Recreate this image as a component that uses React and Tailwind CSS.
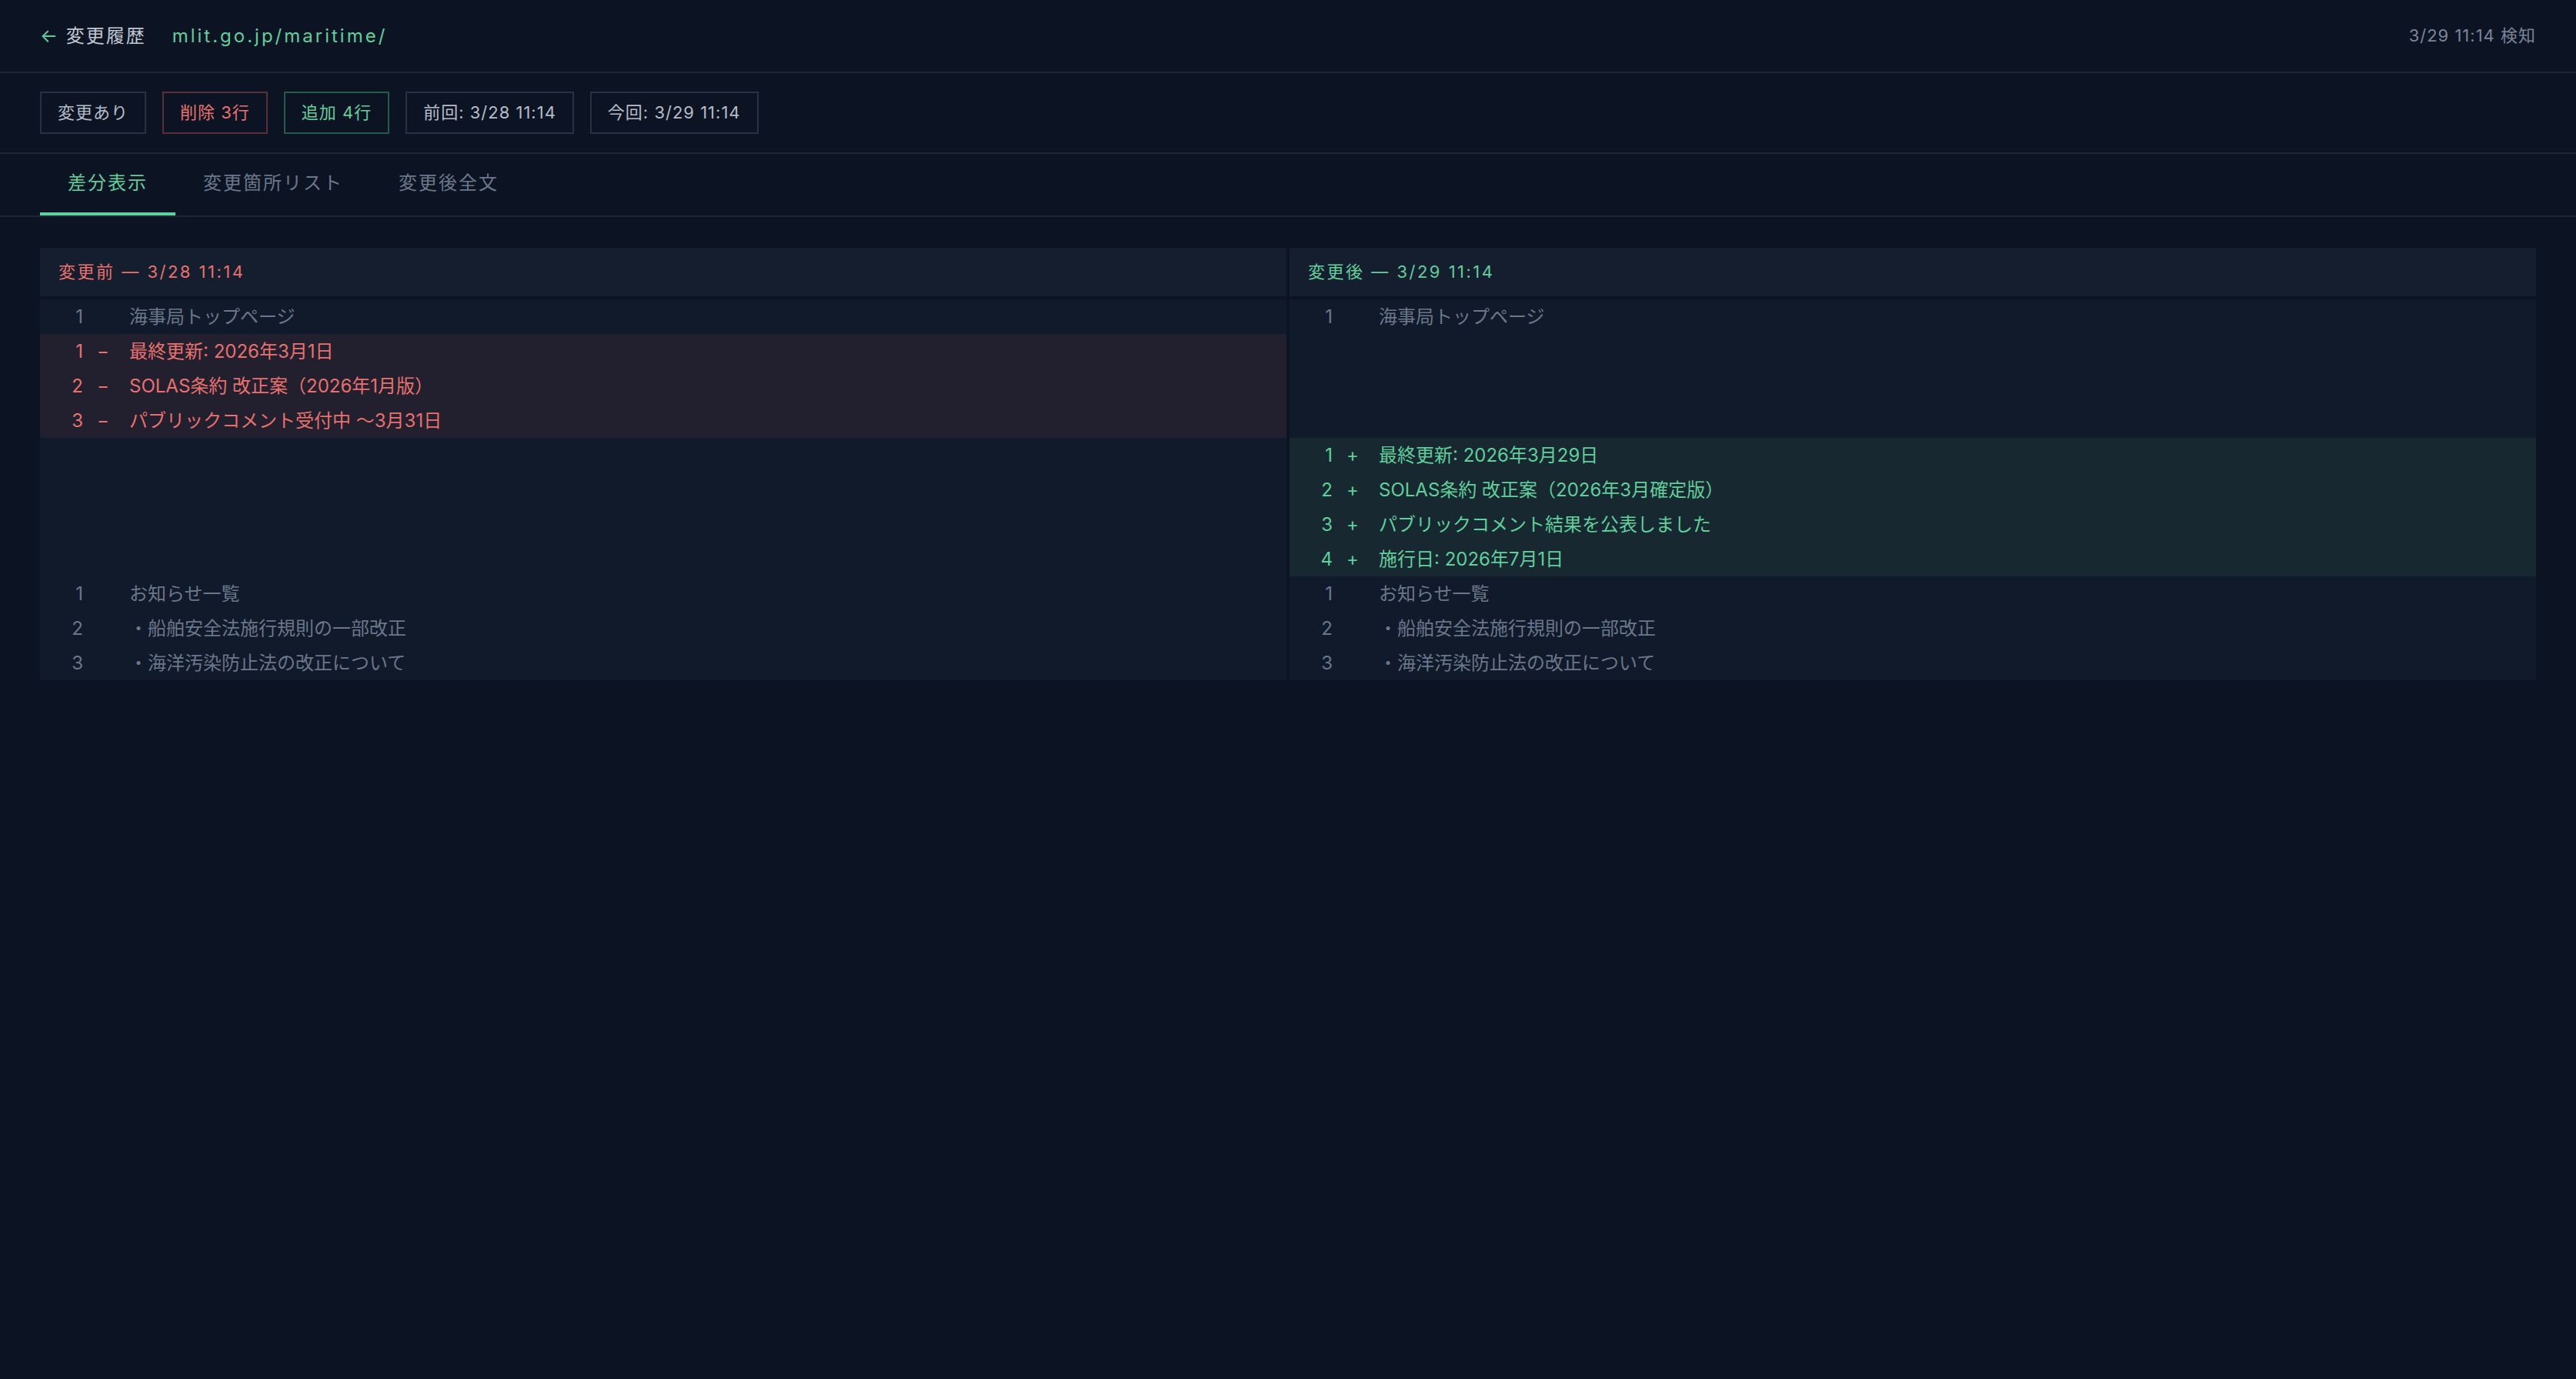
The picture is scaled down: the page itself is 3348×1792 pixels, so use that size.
import React from "react";

const left = [
  { type: "ctx", n: "1", text: "海事局トップページ" },
  { type: "del", n: "1", text: "最終更新: 2026年3月1日" },
  { type: "del", n: "2", text: "SOLAS条約 改正案（2026年1月版）" },
  { type: "del", n: "3", text: "パブリックコメント受付中 〜3月31日" },
  { type: "empty" },
  { type: "empty" },
  { type: "empty" },
  { type: "empty" },
  { type: "ctx", n: "1", text: "お知らせ一覧" },
  { type: "ctx", n: "2", text: "・船舶安全法施行規則の一部改正" },
  { type: "ctx", n: "3", text: "・海洋汚染防止法の改正について" },
];

const right = [
  { type: "ctx", n: "1", text: "海事局トップページ" },
  { type: "empty" },
  { type: "empty" },
  { type: "empty" },
  { type: "add", n: "1", text: "最終更新: 2026年3月29日" },
  { type: "add", n: "2", text: "SOLAS条約 改正案（2026年3月確定版）" },
  { type: "add", n: "3", text: "パブリックコメント結果を公表しました" },
  { type: "add", n: "4", text: "施行日: 2026年7月1日" },
  { type: "ctx", n: "1", text: "お知らせ一覧" },
  { type: "ctx", n: "2", text: "・船舶安全法施行規則の一部改正" },
  { type: "ctx", n: "3", text: "・海洋汚染防止法の改正について" },
];

function Row({ r }) {
  if (r.type === "empty") return <div className="h-[45px]" />;
  const styles = {
    ctx: "text-[#6a778b]",
    del: "bg-[#221f2e] text-[#e8716f]",
    add: "bg-[#172830] text-[#5fcf9b]",
  };
  const marker = r.type === "del" ? "−" : r.type === "add" ? "+" : "";
  return (
    <div className={"flex h-[45px] items-center text-[24px] " + styles[r.type]}>
      <span className="w-[56px] text-right">{r.n}</span>
      <span className="w-[52px] text-center">{marker}</span>
      <span className="pl-[8px] whitespace-pre">{r.text}</span>
    </div>
  );
}

export default function App() {
  return (
    <div className="min-h-screen bg-[#0c1424] font-['Inter','Noto_Sans_CJK_JP',sans-serif]">
      <header className="flex h-[95px] items-center justify-between border-b-2 border-[#1d2636] px-[52px]">
        <div className="flex items-center gap-[34px] text-[24px]">
          <span className="tracking-[2px] text-[#c0c7d1]">
            <span className="text-[#5fcf9b]">←</span> 変更履歴
          </span>
          <span className="tracking-[3px] text-[#5fcf9b]">mlit.go.jp/maritime/</span>
        </div>
        <span className="text-[22px] tracking-[1px] text-[#7a8599]">3/29 11:14 検知</span>
      </header>

      <div className="flex gap-[21px] border-b-2 border-[#1d2636] px-[52px] py-[24px] text-[22px] tracking-[1px]">
        <span className="flex h-[55px] items-center border-2 border-[#263143] px-[21px] text-[#b4bcc8]">変更あり</span>
        <span className="flex h-[55px] items-center border-2 border-[#5b2f38] px-[21px] text-[#e8716f]">削除 3行</span>
        <span className="flex h-[55px] items-center border-2 border-[#235a4b] px-[21px] text-[#5fcf9b]">追加 4行</span>
        <span className="flex h-[55px] items-center border-2 border-[#263143] px-[21px] text-[#b4bcc8]">前回: 3/28 11:14</span>
        <span className="flex h-[55px] items-center border-2 border-[#263143] px-[21px] text-[#b4bcc8]">今回: 3/29 11:14</span>
      </div>

      <nav className="flex border-b-2 border-[#1d2636] px-[52px] text-[24px] tracking-[2px]">
        <span className="flex h-[80px] items-center border-b-4 border-[#5fcf9b] px-[36px] text-[#5fcf9b]">差分表示</span>
        <span className="flex h-[80px] items-center border-b-4 border-transparent px-[36px] text-[#6b778a]">変更箇所リスト</span>
        <span className="flex h-[80px] items-center border-b-4 border-transparent px-[36px] text-[#6b778a]">変更後全文</span>
      </nav>

      <main className="px-[52px] pt-[40px]">
        <div className="grid grid-cols-2 gap-[4px]">
          <div className="flex h-[63px] items-center bg-[#151e2e] px-[24px] text-[22px] tracking-[2.5px] text-[#e8716f]">
            変更前 — 3/28 11:14
          </div>
          <div className="flex h-[63px] items-center bg-[#151e2e] px-[24px] text-[22px] tracking-[2.5px] text-[#5fcf9b]">
            変更後 — 3/29 11:14
          </div>
          <div className="bg-[#111a2a]">
            {left.map((r, i) => (
              <Row key={i} r={r} />
            ))}
          </div>
          <div className="bg-[#111a2a]">
            {right.map((r, i) => (
              <Row key={i} r={r} />
            ))}
          </div>
        </div>
      </main>
    </div>
  );
}
